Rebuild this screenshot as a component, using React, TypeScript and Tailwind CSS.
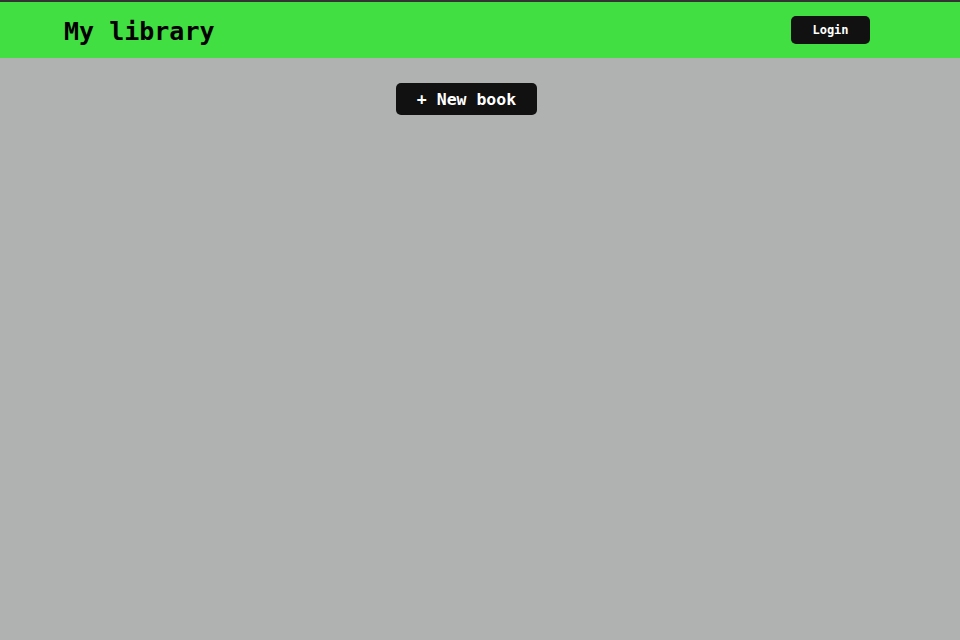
export default function App() {
  return (
    <div
      className="min-h-screen bg-[#b0b2b1]"
      style={{ fontFamily: '"DejaVu Sans Mono", "Liberation Mono", monospace' }}
    >
      <header className="flex h-[58px] items-center justify-between border-t-2 border-[#333] bg-[#41df41] pl-16 pr-[90px]">
        <h1 className="pt-[3px] text-[25px] font-bold text-black">My library</h1>
        <button className="h-[28px] w-[79px] rounded-[5px] bg-[#111] text-[12px] font-bold text-white">
          Login
        </button>
      </header>

      <main className="pt-[25px] pl-[396px]">
        <button className="h-[32px] w-[141px] rounded-[5px] bg-[#111] pt-[3px] text-[16.5px] font-bold text-white">
          + New book
        </button>
      </main>
    </div>
  );
}
